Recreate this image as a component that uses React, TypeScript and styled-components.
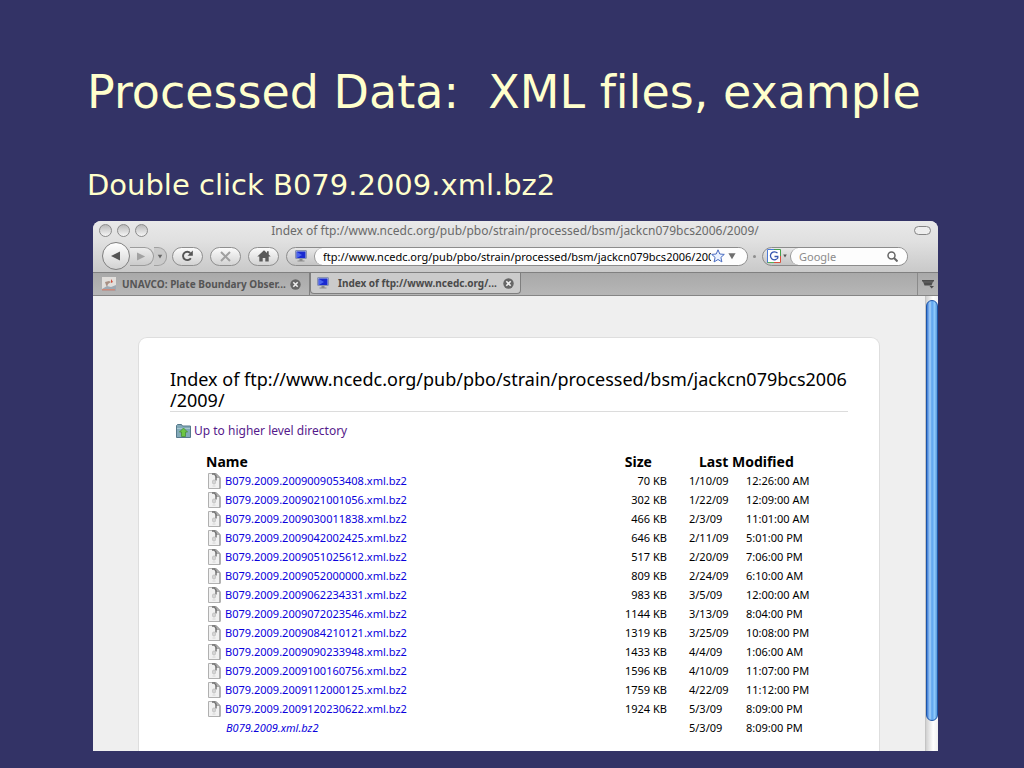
import React from "react";
import styled, { createGlobalStyle } from "styled-components";

const UI_FONT = `"Noto Sans", "Open Sans", sans-serif`;
const SLIDE_FONT = `"DejaVu Sans", Verdana, sans-serif`;
const LOCATION = "ftp://www.ncedc.org/pub/pbo/strain/processed/bsm/jackcn079bcs2006/2009/";

const GlobalStyle = createGlobalStyle`
  *, *::before, *::after { box-sizing: border-box; }
  body { margin: 0; background: #333366; }
  button, input { font: inherit; color: inherit; margin: 0; padding: 0; border: 0; background: none; }
  svg { display: block; }
`;

const Slide = styled.main`
  min-height: 100vh;
  padding: 62px 86px 17px 93px;
  background: #333366;
  color: #ffffcc;
  font-family: ${SLIDE_FONT};
  font-variant-ligatures: none;
`;

const SlideTitle = styled.h1`
  margin: 0 -20px 0 -6px;
  font-size: 46px;
  font-weight: 400;
  line-height: 60px;
  white-space: pre;
`;

const SlideText = styled.p`
  margin: 44px 0 16px -6px;
  font-size: 29px;
  line-height: 39px;
`;

const BrowserWindow = styled.section`
  overflow: hidden;
  border-radius: 8px 8px 0 0;
  background: #efefef;
  color: #000;
  font-family: ${UI_FONT};
`;

const Chrome = styled.header`
  background: linear-gradient(#e9e9e9, #e0e0e0 40%, #c9c9c9);
  border-bottom: 1px solid #808080;
`;

const TitleBar = styled.div`
  display: grid;
  grid-template-columns: 1fr auto 1fr;
  align-items: center;
  height: 19px;
  padding: 0 7px 0 6px;
`;

const Lights = styled.div`
  display: flex;
  gap: 5px;
`;

const Light = styled.button`
  width: 13px;
  height: 13px;
  border: 1px solid #8a8a8a;
  border-radius: 50%;
  background: linear-gradient(#b9b9b9, #f6f6f6);
`;

const WindowTitle = styled.div`
  font-size: 12px;
  line-height: 19px;
  color: #6a6a6a;
`;

const Pill = styled.button`
  justify-self: end;
  width: 17px;
  height: 9px;
  border: 1px solid #858585;
  border-radius: 5px;
  background: #eee;
`;

const Toolbar = styled.div`
  display: flex;
  align-items: center;
  height: 32px;
  padding: 0 30px 0 9px;
`;

const History = styled.div`
  display: flex;
  align-items: center;
  margin-right: 5px;
`;

const BackButton = styled.button`
  display: grid;
  place-items: center;
  z-index: 1;
  width: 28px;
  height: 28px;
  border: 1px solid #7f7f7f;
  border-radius: 50%;
  background: linear-gradient(#fff, #d2d2d2);
`;

const ForwardButton = styled.button`
  display: grid;
  place-items: center;
  width: 24px;
  height: 19px;
  border: 1px solid #9c9c9c;
  border-left: 0;
  border-radius: 0 10px 10px 0;
  background: linear-gradient(#ececec, #cbcbcb);
`;

const HistoryMenu = styled.button`
  display: grid;
  place-items: center;
  width: 13px;
  height: 19px;
  border: 1px solid #a0a0a0;
  border-left: 0;
  border-radius: 0 9px 9px 0;
  background: #cbcbcb;
`;

const ToolButton = styled.button`
  display: grid;
  place-items: center;
  width: 31px;
  height: 19px;
  margin-right: 7px;
  border: 1px solid #8f8f8f;
  border-radius: 10px;
  background: linear-gradient(#fbfbfb, #d3d3d3);
`;

const Field = styled.div<{ $grow?: boolean }>`
  display: flex;
  ${(p) => (p.$grow ? "flex: 1; min-width: 0;" : "width: 146px;")}
  height: 19px;
  border: 1px solid #8c8c8c;
  border-radius: 10px;
  background: linear-gradient(#e8e8e8, #c4c4c4);
  overflow: hidden;
`;

const FieldIcon = styled.span`
  display: flex;
  align-items: center;
  justify-content: center;
  gap: 2px;
  width: 27px;
`;

const FieldBody = styled.div`
  display: flex;
  align-items: center;
  flex: 1;
  min-width: 0;
  padding: 0 8px;
  border-left: 1px solid #9a9a9a;
  border-radius: 10px 0 0 10px;
  background: #fdfdfd;
`;

const FieldInput = styled.input`
  flex: 1;
  min-width: 0;
  height: 17px;
  font-size: 11px;
  outline: 0;
  &::placeholder { color: #8b8b8b; opacity: 1; }
`;

const FieldButton = styled.button`
  display: grid;
  place-items: center;
  min-width: 14px;
`;

const Grip = styled.span`
  width: 3px;
  height: 3px;
  margin: 0 6px 0 5px;
  border-radius: 50%;
  background: #8e8e8e;
`;

const TabBar = styled.nav`
  display: flex;
  height: 23px;
  background: linear-gradient(#a9a9a9, #b6b6b6);
  border-bottom: 1px solid #858585;
`;

const Tab = styled.div<{ $active?: boolean }>`
  display: flex;
  align-items: center;
  width: ${(p) => (p.$active ? 211 : 217)}px;
  height: ${(p) => (p.$active ? 21 : 22)}px;
  padding: 0 ${(p) => (p.$active ? 6 : 8)}px 0 ${(p) => (p.$active ? 6 : 9)}px;
  border: solid #7f7f7f;
  border-width: ${(p) => (p.$active ? "0 1px 1px" : "0 1px 0 0")};
  border-radius: ${(p) => (p.$active ? "0 0 4px 4px" : "0")};
  background: ${(p) => (p.$active ? "#cbcbcb" : "transparent")};
  color: ${(p) => (p.$active ? "#4a4a4a" : "#555")};
`;

const TabLabel = styled.a<{ $inset: number }>`
  flex: 1;
  padding-left: ${(p) => p.$inset}px;
  color: inherit;
  font-size: 10px;
  font-weight: 700;
  line-height: 18px;
  text-decoration: none;
  white-space: nowrap;
`;

const PlainButton = styled.button`
  display: grid;
  place-items: center;
`;

const TabList = styled.button`
  display: grid;
  place-items: center;
  width: 21px;
  margin-left: auto;
  border-left: 1px solid #8a8a8a;
`;

const Viewport = styled.div`
  display: flex;
`;

const Page = styled.div`
  flex: 1;
  min-width: 0;
  padding: 41px 45px 0;
`;

const Card = styled.article`
  padding: 31px 31px 14px;
  border: 1px solid #dedede;
  border-bottom: 0;
  border-radius: 9px 9px 0 0;
  background: #fff;
`;

const Heading = styled.h2`
  margin: 0;
  border-bottom: 1px solid #dcdcdc;
  font-size: 18px;
  font-weight: 400;
  line-height: 21px;
  white-space: nowrap;
`;

const UpLink = styled.a`
  display: flex;
  align-items: center;
  gap: 3px;
  margin: 9px 6px 11px;
  color: #551a8b;
  font-size: 12px;
  line-height: 20px;
  text-decoration: none;
`;

const Listing = styled.table`
  width: calc(100% - 36px);
  margin-left: 36px;
  border-collapse: collapse;
  table-layout: fixed;
  font-size: 11px;
`;

const Col = styled.col<{ $w?: number }>`
  width: ${(p) => (p.$w ? `${p.$w}px` : "auto")};
`;

const Head = styled.th<{ $right?: boolean; $left?: number }>`
  height: 19px;
  padding: 0 ${(p) => (p.$right ? 37 : 0)}px 0 ${(p) => p.$left ?? 0}px;
  text-align: ${(p) => (p.$right ? "right" : "left")};
  font-size: 14px;
  line-height: 19px;
`;

const Cell = styled.td<{ $right?: boolean }>`
  height: 19px;
  padding: 0 ${(p) => (p.$right ? 22 : 0)}px 0 0;
  text-align: ${(p) => (p.$right ? "right" : "left")};
  line-height: 19px;
  white-space: nowrap;
`;

const FileLink = styled.a<{ $plain?: boolean }>`
  display: flex;
  align-items: center;
  gap: 4px;
  padding-left: ${(p) => (p.$plain ? 20 : 2)}px;
  font-style: ${(p) => (p.$plain ? "italic" : "normal")};
  color: #0a00dc;
  text-decoration: none;
`;

const ScrollTrack = styled.div`
  display: flex;
  width: 13px;
  padding: 4px 0 30px;
  border-left: 1px solid #c4c4c4;
  background: linear-gradient(90deg, #d0d0d0, #fff 60%, #f0f0f0);
`;

const ScrollThumb = styled.div`
  flex: 1;
  border: 1px solid #1d55a8;
  border-radius: 6px;
  background: linear-gradient(90deg, #3a78d4, #a6d2fa 30%, #5aa2ee 50%, #8cc8fb 75%, #5a9bdc);
`;

const Monitor = ({ size }: { size: number }) => (
  <svg width={size} height={size} viewBox="0 0 12 12" aria-hidden="true">
    <rect x="0.5" y="0.5" width="11" height="8" rx="0.5" fill="#b9c4dc" stroke="#8a94b0" />
    <rect x="1.5" y="1.5" width="9" height="6.5" fill="#1a2ad0" />
    <path d="M2 2l5 3-5 3z" fill="#4c66ee" />
    <path d="M4.500 9h3v1.500h2v1h-7v-1h2z" fill="#8b8b8b" />
  </svg>
);

const Triangle = ({ d, color, w = 10, h = 10 }: { d: string; color: string; w?: number; h?: number }) => (
  <svg width={w} height={h} viewBox="0 0 10 10" aria-hidden="true">
    <path d={d} fill={color} />
  </svg>
);

const LEFT = "M0 5L9 0.500V9.500z";
const RIGHT = "M9 5L0 0.500V9.500z";
const DOWN = "M0.500 1.500H9.500L5 9z";

const CloseIcon = () => (
  <svg width="11" height="11" viewBox="0 0 11 11" aria-hidden="true">
    <circle cx="5.500" cy="5.500" r="5.200" fill="#666" />
    <path d="M3.300 3.300l4.400 4.400M7.700 3.300l-4.400 4.400" stroke="#eee" strokeWidth="1.600" />
  </svg>
);

const FileIcon = () => (
  <svg width="13" height="16" viewBox="0 0 13 16" aria-hidden="true">
    <path d="M0.500 0.500h7.500l4 4v11h-11.500z" fill="#f1f1f1" stroke="#b0b0b0" />
    <path d="M8 0.500v4h4z" fill="#b5b5b5" stroke="#8a8a8a" strokeWidth="0.600" />
    <path d="M4 1h2.500l1.500 2.500v4" fill="none" stroke="#707070" strokeWidth="1.400" />
    <path d="M12 5v10.500" stroke="#8c8c8c" />
    <rect x="4.500" y="7" width="3" height="4" rx="1.200" fill="#d4d4d4" stroke="#b4b4b4" strokeWidth="0.600" />
    <path d="M4.500 13h3" stroke="#d4d4d4" />
  </svg>
);

const FolderUp = () => (
  <svg width="15" height="14" viewBox="0 0 15 14" aria-hidden="true">
    <path d="M0.500 1.500l1-1h4l1 1.500h8v11.500h-14z" fill="#82a9b8" stroke="#56798b" />
    <path d="M1 4.500h13" stroke="#a9c8d2" />
    <path d="M7.500 4l4 4h-2v4.500h-4v-4.500h-2z" fill="#6cc644" stroke="#478f33" strokeWidth="0.800" />
  </svg>
);

const FILES: [string, string, string, string][] = [
  ["B079.2009.2009009053408.xml.bz2", "70 KB", "1/10/09", "12:26:00 AM"],
  ["B079.2009.2009021001056.xml.bz2", "302 KB", "1/22/09", "12:09:00 AM"],
  ["B079.2009.2009030011838.xml.bz2", "466 KB", "2/3/09", "11:01:00 AM"],
  ["B079.2009.2009042002425.xml.bz2", "646 KB", "2/11/09", "5:01:00 PM"],
  ["B079.2009.2009051025612.xml.bz2", "517 KB", "2/20/09", "7:06:00 PM"],
  ["B079.2009.2009052000000.xml.bz2", "809 KB", "2/24/09", "6:10:00 AM"],
  ["B079.2009.2009062234331.xml.bz2", "983 KB", "3/5/09", "12:00:00 AM"],
  ["B079.2009.2009072023546.xml.bz2", "1144 KB", "3/13/09", "8:04:00 PM"],
  ["B079.2009.2009084210121.xml.bz2", "1319 KB", "3/25/09", "10:08:00 PM"],
  ["B079.2009.2009090233948.xml.bz2", "1433 KB", "4/4/09", "1:06:00 AM"],
  ["B079.2009.2009100160756.xml.bz2", "1596 KB", "4/10/09", "11:07:00 PM"],
  ["B079.2009.2009112000125.xml.bz2", "1759 KB", "4/22/09", "11:12:00 PM"],
  ["B079.2009.2009120230622.xml.bz2", "1924 KB", "5/3/09", "8:09:00 PM"],
  ["B079.2009.xml.bz2", "", "5/3/09", "8:09:00 PM"],
];

export default function App() {
  return (
    <>
      <GlobalStyle />
      <Slide>
        <SlideTitle>{"Processed Data:  XML files, example"}</SlideTitle>
        <SlideText>Double click B079.2009.xml.bz2</SlideText>
        <BrowserWindow>
          <Chrome>
            <TitleBar>
              <Lights>
                <Light aria-label="Close window" />
                <Light aria-label="Minimize window" />
                <Light aria-label="Zoom window" />
              </Lights>
              <WindowTitle>Index of {LOCATION}</WindowTitle>
              <Pill aria-label="Toggle toolbar" />
            </TitleBar>
            <Toolbar>
              <History>
                <BackButton aria-label="Back">
                  <Triangle d={LEFT} color="#555" />
                </BackButton>
                <ForwardButton aria-label="Forward">
                  <Triangle d={RIGHT} color="#a2a2a2" w={9} h={9} />
                </ForwardButton>
                <HistoryMenu aria-label="Recent pages">
                  <Triangle d={DOWN} color="#666" w={6} h={5} />
                </HistoryMenu>
              </History>
              <ToolButton aria-label="Reload">
                <svg width="13" height="12" viewBox="0 0 13 12" aria-hidden="true">
                  <path d="M9.800 8.200A4.200 4.200 0 1 1 9.300 3" fill="none" stroke="#555" strokeWidth="1.900" />
                  <path d="M11.800 0.500v5.300h-5.300z" fill="#555" />
                </svg>
              </ToolButton>
              <ToolButton aria-label="Stop">
                <svg width="11" height="11" viewBox="0 0 11 11" aria-hidden="true">
                  <path d="M1 1l9 9M10 1l-9 9" stroke="#a0a0a0" strokeWidth="2" />
                </svg>
              </ToolButton>
              <ToolButton aria-label="Home">
                <svg width="14" height="12" viewBox="0 0 14 12" aria-hidden="true">
                  <path d="M7 0.300L0.300 6.500H2.300V11.500H5.700V8H8.300V11.500H11.700V6.500H13.700L11.700 4.600V1.300H10V3z" fill="#5a5a5a" />
                </svg>
              </ToolButton>
              <Field $grow>
                <FieldIcon>
                  <Monitor size={12} />
                </FieldIcon>
                <FieldBody>
                  <FieldInput aria-label="Location" defaultValue={LOCATION} />
                  <FieldButton aria-label="Bookmark this page">
                    <svg width="14" height="14" viewBox="0 0 14 14" aria-hidden="true">
                      <path d="M7 0.800l1.800 4.200 4.500 0.400-3.400 3 1 4.500L7 10.500l-3.900 2.400 1-4.500-3.400-3 4.500-0.400z" fill="#eaf2ff" stroke="#4a6cc0" />
                    </svg>
                  </FieldButton>
                  <FieldButton aria-label="Show history">
                    <Triangle d={DOWN} color="#6e6e6e" w={8} h={8} />
                  </FieldButton>
                </FieldBody>
              </Field>
              <Grip />
              <Field>
                <FieldIcon>
                  <svg width="14" height="14" viewBox="0 0 14 14" aria-hidden="true">
                    <rect x="0.500" y="0.500" width="13" height="13" fill="#fff" />
                    <path d="M0.500 14V0.500H7" fill="none" stroke="#4c7ad8" />
                    <path d="M7 0.500h6.500V7" fill="none" stroke="#44a04c" />
                    <path d="M13.500 7v6.500H7" fill="none" stroke="#d8503c" />
                    <path d="M0.500 13.500H7" stroke="#58b058" />
                    <path d="M10.500 4.200A4 4 0 1 0 10.800 9V7.500H7.500" fill="none" stroke="#3656b0" strokeWidth="1.300" />
                  </svg>
                  <Triangle d={DOWN} color="#555" w={4} h={4} />
                </FieldIcon>
                <FieldBody>
                  <FieldInput aria-label="Search" placeholder="Google" />
                  <FieldButton aria-label="Search Google">
                    <svg width="11" height="11" viewBox="0 0 11 11" aria-hidden="true">
                      <circle cx="4.500" cy="4.500" r="3.500" fill="none" stroke="#666" strokeWidth="1.500" />
                      <path d="M7 7l3.500 3.500" stroke="#666" strokeWidth="2" />
                    </svg>
                  </FieldButton>
                </FieldBody>
              </Field>
            </Toolbar>
          </Chrome>
          <TabBar>
            <Tab>
              <svg width="14" height="14" viewBox="0 0 14 14" aria-hidden="true">
                <rect width="14" height="14" fill="#e2dfdc" />
                <path d="M3 5l4-1 2 1-3 2-1 3-1-2z" fill="#a89084" />
                <path d="M0 12l5-3 4 1 5-2v6H0z" fill="#9ea8b2" />
                <path d="M0 12h13v1.500H0z" fill="#d08a78" />
                <path d="M9 2l2 3-2 1z" fill="#d0503c" />
              </svg>
              <TabLabel href="#" $inset={6}>UNAVCO: Plate Boundary Obser...</TabLabel>
              <PlainButton aria-label="Close tab"><CloseIcon /></PlainButton>
            </Tab>
            <Tab $active>
              <Monitor size={12} />
              <TabLabel href="#" $inset={9}>Index of ftp://www.ncedc.org/...</TabLabel>
              <PlainButton aria-label="Close tab"><CloseIcon /></PlainButton>
            </Tab>
            <TabList aria-label="List all tabs">
              <svg width="12" height="10" viewBox="0 0 12 10" aria-hidden="true">
                <path d="M0 1h12v1.500h-1l-1.500 4h-7L1 2.500H0z" fill="#4d4d4d" />
                <path d="M1.500 3h9" stroke="#7a7a7a" strokeWidth="0.600" />
                <path d="M7.500 7h4.500L9.700 9.500z" fill="#4d4d4d" />
              </svg>
            </TabList>
          </TabBar>
          <Viewport>
            <Page>
              <Card>
                <Heading>
                  Index of ftp://www.ncedc.org/pub/pbo/strain/processed/bsm/jackcn079bcs2006
                  <br />
                  /2009/
                </Heading>
                <UpLink href="#">
                  <FolderUp />
                  Up to higher level directory
                </UpLink>
                <Listing>
                  <colgroup>
                    <Col />
                    <Col $w={80} />
                    <Col $w={57} />
                    <Col $w={102} />
                  </colgroup>
                  <thead>
                    <tr>
                      <Head scope="col">Name</Head>
                      <Head scope="col" $right>Size</Head>
                      <Head scope="col" colSpan={2} $left={10}>Last Modified</Head>
                    </tr>
                  </thead>
                  <tbody>
                    {FILES.map(([name, size, date, time]) => (
                      <tr key={name}>
                        <Cell>
                          <FileLink href="#" $plain={!size}>
                            {size && <FileIcon />}
                            {name}
                          </FileLink>
                        </Cell>
                        <Cell $right>{size}</Cell>
                        <Cell>{date}</Cell>
                        <Cell>{time}</Cell>
                      </tr>
                    ))}
                  </tbody>
                </Listing>
              </Card>
            </Page>
            <ScrollTrack>
              <ScrollThumb />
            </ScrollTrack>
          </Viewport>
        </BrowserWindow>
      </Slide>
    </>
  );
}
